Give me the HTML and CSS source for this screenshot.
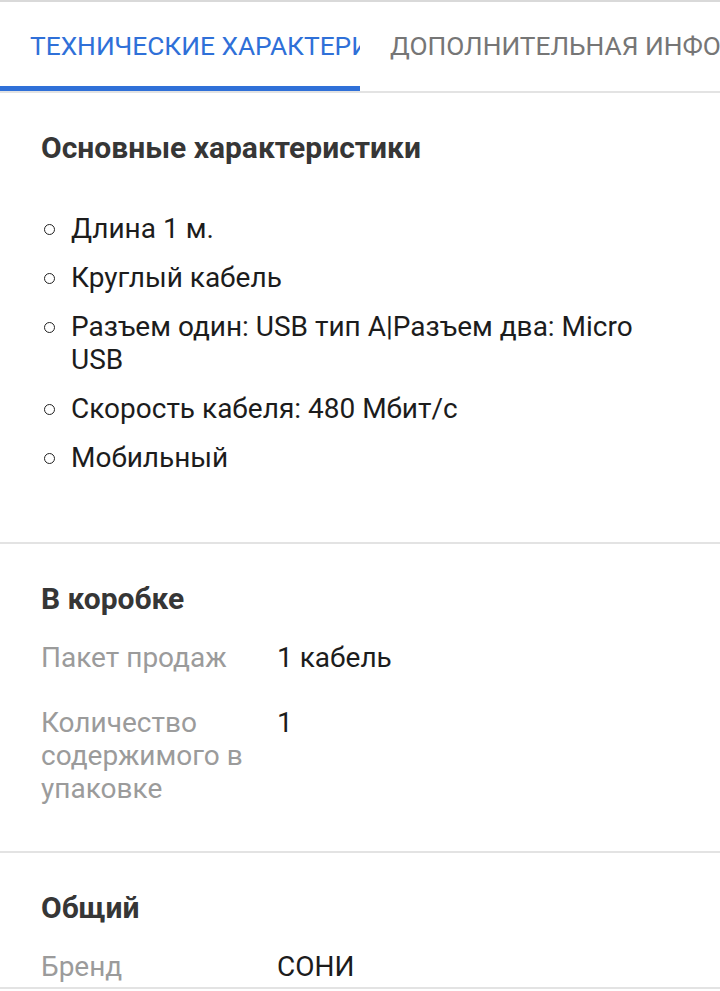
FILE: index.html
```html
<!DOCTYPE html>
<html lang="ru">
<head>
<meta charset="utf-8">
<title>Характеристики</title>
<link rel="stylesheet" href="styles.css">
</head>
<body>
<div class="page">
  <nav class="tabs">
    <div class="tab tab-active">ТЕХНИЧЕСКИЕ ХАРАКТЕРИСТИКИ</div>
    <div class="tab">ДОПОЛНИТЕЛЬНАЯ ИНФОРМАЦИЯ</div>
  </nav>

  <section class="section section-first">
    <h2 class="section-title">Основные характеристики</h2>
    <ul class="features">
      <li>Длина 1 м.</li>
      <li>Круглый кабель</li>
      <li>Разъем один: USB тип A|Разъем два: Micro USB</li>
      <li>Скорость кабеля: 480 Мбит/с</li>
      <li>Мобильный</li>
    </ul>
  </section>

  <section class="section section-box">
    <h2 class="section-title">В коробке</h2>
    <div class="specs">
      <div class="spec-label">Пакет продаж</div>
      <div class="spec-value">1 кабель</div>
      <div class="spec-label">Количество содержимого в упаковке</div>
      <div class="spec-value">1</div>
    </div>
  </section>

  <section class="section section-last">
    <h2 class="section-title">Общий</h2>
    <div class="specs">
      <div class="spec-label">Бренд</div>
      <div class="spec-value">СОНИ</div>
    </div>
  </section>
</div>
</body>
</html>
```

FILE: styles.css
```css
* { box-sizing: border-box; }

html, body {
  margin: 0;
  padding: 0;
  background: #ffffff;
}

body {
  font-family: Roboto, "Noto Sans", "Liberation Sans", sans-serif;
  color: #1c1c1c;
  width: 720px;
  height: 991px;
  overflow: hidden;
}

.page {
  border-top: 2px solid #d9d9d9;
}

.tabs {
  display: flex;
  height: 91px;
  border-bottom: 2px solid #e3e3e3;
}

.tab {
  flex: 0 0 360px;
  padding: 28px 30px 0;
  font-size: 26.3px;
  line-height: 32px;
  white-space: nowrap;
  overflow: hidden;
  color: #767676;
}

.tab-active {
  color: #2f70d8;
  border-bottom: 5px solid #2f70d8;
}

.section {
  padding: 38px 41px 0;
  border-bottom: 2px solid #e3e3e3;
}

.section-title {
  margin: 0;
  font-size: 30px;
  line-height: 34px;
  font-weight: 700;
  color: #363636;
}

.features {
  list-style: none;
  margin: 47px 0 0;
  padding: 0 0 0 30px;
}

.features li {
  position: relative;
  font-size: 28px;
  line-height: 33px;
  margin-bottom: 16px;
  color: #1c1c1c;
}

.features li::before {
  content: "";
  position: absolute;
  left: -27px;
  top: 12px;
  width: 9px;
  height: 9px;
  border: 1.5px solid #222;
  border-radius: 50%;
}

.section-first {
  height: 451px;
}

.section-box {
  height: 309px;
}

.section-last {
  height: 136px;
}

.specs {
  display: grid;
  grid-template-columns: 236px 1fr;
  row-gap: 32px;
  margin-top: 25px;
}

.spec-label {
  font-size: 28px;
  line-height: 33px;
  color: #9b9b9b;
  padding-right: 20px;
}

.spec-value {
  font-size: 28px;
  line-height: 33px;
  color: #1c1c1c;
}
```
